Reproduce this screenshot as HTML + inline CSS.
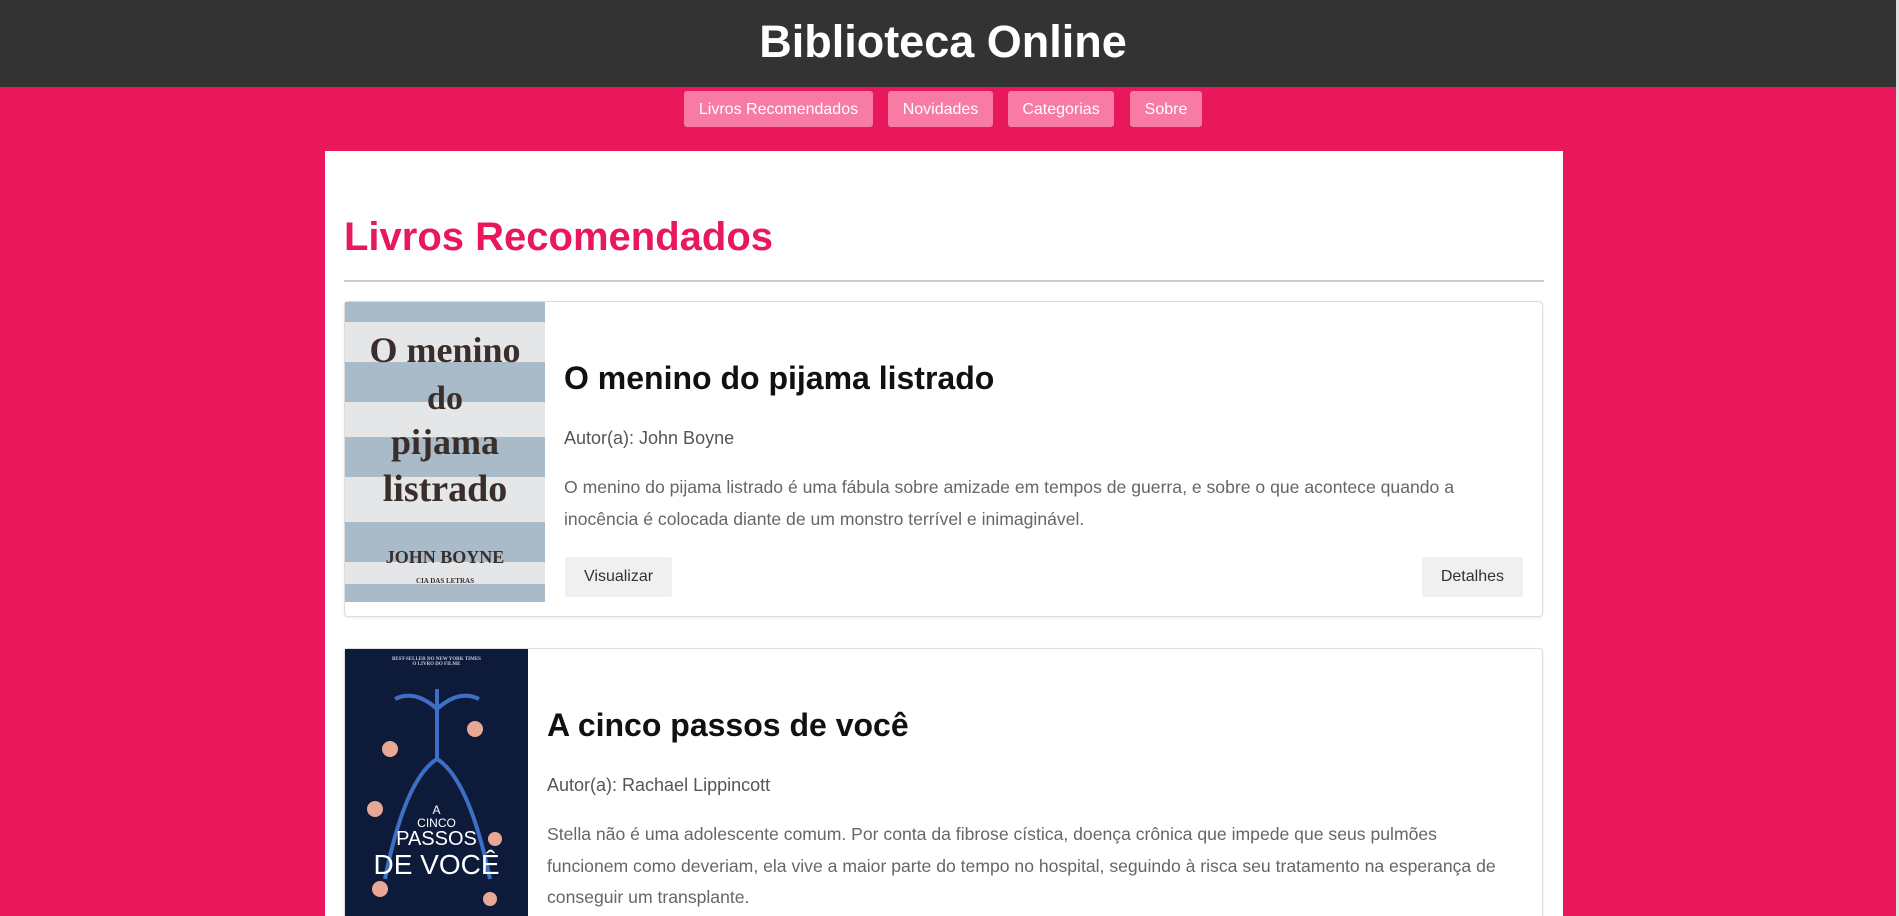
<!DOCTYPE html>
<html><head><meta charset="utf-8"><style>
*{box-sizing:border-box;margin:0;padding:0}
html,body{width:1899px;height:916px;overflow:hidden}
body{background:#e8185b;font-family:"Liberation Sans",Arial,sans-serif;position:relative}
header{background:#333;height:87px;color:#fff;text-align:center;font-weight:bold;font-size:45px;line-height:83px;width:1896px;padding-right:10px}
nav{position:absolute;top:91px;left:0;width:1884px;height:36px}
nav a{position:absolute;top:0;height:36px;background:#f87ba6;color:#fff;font-size:16px;line-height:37px;text-align:center;border-radius:3px;text-decoration:none}
.main{position:absolute;left:325px;top:151px;width:1238px;height:800px;background:#fff;padding:0 19px}
h2{color:#e8185b;font-size:40px;margin-top:62px;line-height:48px}
hr{border:0;border-top:2px solid #ccc;margin-top:19px}
.card{position:absolute;left:19px;width:1199px;border:1px solid #ddd;border-radius:4px;box-shadow:0 1px 3px rgba(0,0,0,.08);background:#fff}
.img{position:absolute;left:0;top:0;height:300px;overflow:hidden}
.ct{position:absolute;top:58px;right:19px}
.ct h3{font-size:32px;line-height:37px;color:#111}
.au{font-size:18px;color:#555;margin-top:30px;line-height:23px}
.ds{font-size:17.6px;color:#666;margin-top:22px;line-height:31.5px;white-space:nowrap}
.btns{margin-top:22px;height:40px;position:relative}
.btn{position:absolute;top:0;height:40px;background:#f0f0f0;color:#333;font-size:16px;line-height:40px;padding:0 19px;border-radius:2px;white-space:nowrap}
.c1 .st{position:absolute;left:0;width:200px;background:#a9bac8}
.sf{font-family:"Liberation Serif",serif;font-weight:bold;color:#3a2e2a;text-align:center;position:absolute;left:0;width:200px;line-height:1}
</style></head><body>
<header>Biblioteca Online</header>
<nav>
<a style="left:684px;width:189px">Livros Recomendados</a>
<a style="left:888px;width:105px">Novidades</a>
<a style="left:1008px;width:106px">Categorias</a>
<a style="left:1130px;width:72px">Sobre</a>
</nav>
<div style="position:absolute;right:0;top:0;width:3px;height:916px;background:#e0e0e0"></div>
<div class="main">
<h2>Livros Recomendados</h2>
<hr>
<div class="card c1" style="top:150px;height:316px">
 <div class="img" style="width:200px;background:#e4e6e8">
  <div class="st" style="top:0;height:20px"></div>
  <div class="st" style="top:60px;height:40px"></div>
  <div class="st" style="top:135px;height:40px"></div>
  <div class="st" style="top:220px;height:40px"></div>
  <div class="st" style="top:282px;height:18px"></div>
  <div class="sf" style="top:30px;font-size:36px">O menino</div>
  <div class="sf" style="top:80px;font-size:34px">do</div>
  <div class="sf" style="top:122px;font-size:36px">pijama</div>
  <div class="sf" style="top:168px;font-size:38px">listrado</div>
  <div class="sf" style="top:246px;font-size:18px">JOHN BOYNE</div>
  <div class="sf" style="top:276px;font-size:7px">CIA DAS LETRAS</div>
 </div>
 <div class="ct" style="left:219px">
  <h3>O menino do pijama listrado</h3>
  <div class="au">Autor(a): John Boyne</div>
  <div class="ds">O menino do pijama listrado é uma fábula sobre amizade em tempos de guerra, e sobre o que acontece quando a<br>inocência é colocada diante de um monstro terrível e inimaginável.</div>
  <div class="btns"><span class="btn" style="left:1px">Visualizar</span><span class="btn" style="right:0">Detalhes</span></div>
 </div>
</div>
<div class="card c2" style="top:497px;height:330px">
 <div class="img" style="width:183px;background:#0e1a3a">
  <div style="position:absolute;left:0;top:8px;width:183px;text-align:center;color:#ccd;font:bold 5px 'Liberation Serif',serif">BEST-SELLER DO NEW YORK TIMES<br>O LIVRO DO FILME</div>
  <svg width="183" height="300" style="position:absolute;left:0;top:0">
   <g stroke="#3d6fc4" stroke-width="4" fill="none">
    <path d="M92 40 V110 M92 110 Q60 130 40 230 M92 110 Q124 130 145 230 M92 60 Q70 40 50 50 M92 60 Q114 40 134 50"/>
   </g>
   <g fill="#e9a896"><circle cx="45" cy="100" r="8"/><circle cx="130" cy="80" r="8"/><circle cx="30" cy="160" r="8"/><circle cx="150" cy="190" r="7"/><circle cx="35" cy="240" r="8"/><circle cx="145" cy="250" r="7"/></g>
  </svg>
  <div style="position:absolute;left:0;top:155px;width:183px;text-align:center;color:#fff;font-family:'Liberation Sans Narrow','Liberation Sans',sans-serif;line-height:1.05">
   <div style="font-size:12px">A<br>CINCO</div><div style="font-size:20px">PASSOS</div><div style="font-size:28px">DE VOCÊ</div></div>
 </div>
 <div class="ct" style="left:202px">
  <h3>A cinco passos de você</h3>
  <div class="au">Autor(a): Rachael Lippincott</div>
  <div class="ds">Stella não é uma adolescente comum. Por conta da fibrose cística, doença crônica que impede que seus pulmões<br>funcionem como deveriam, ela vive a maior parte do tempo no hospital, seguindo à risca seu tratamento na esperança de<br>conseguir um transplante.</div>
 </div>
</div>
</div>
</body></html>
